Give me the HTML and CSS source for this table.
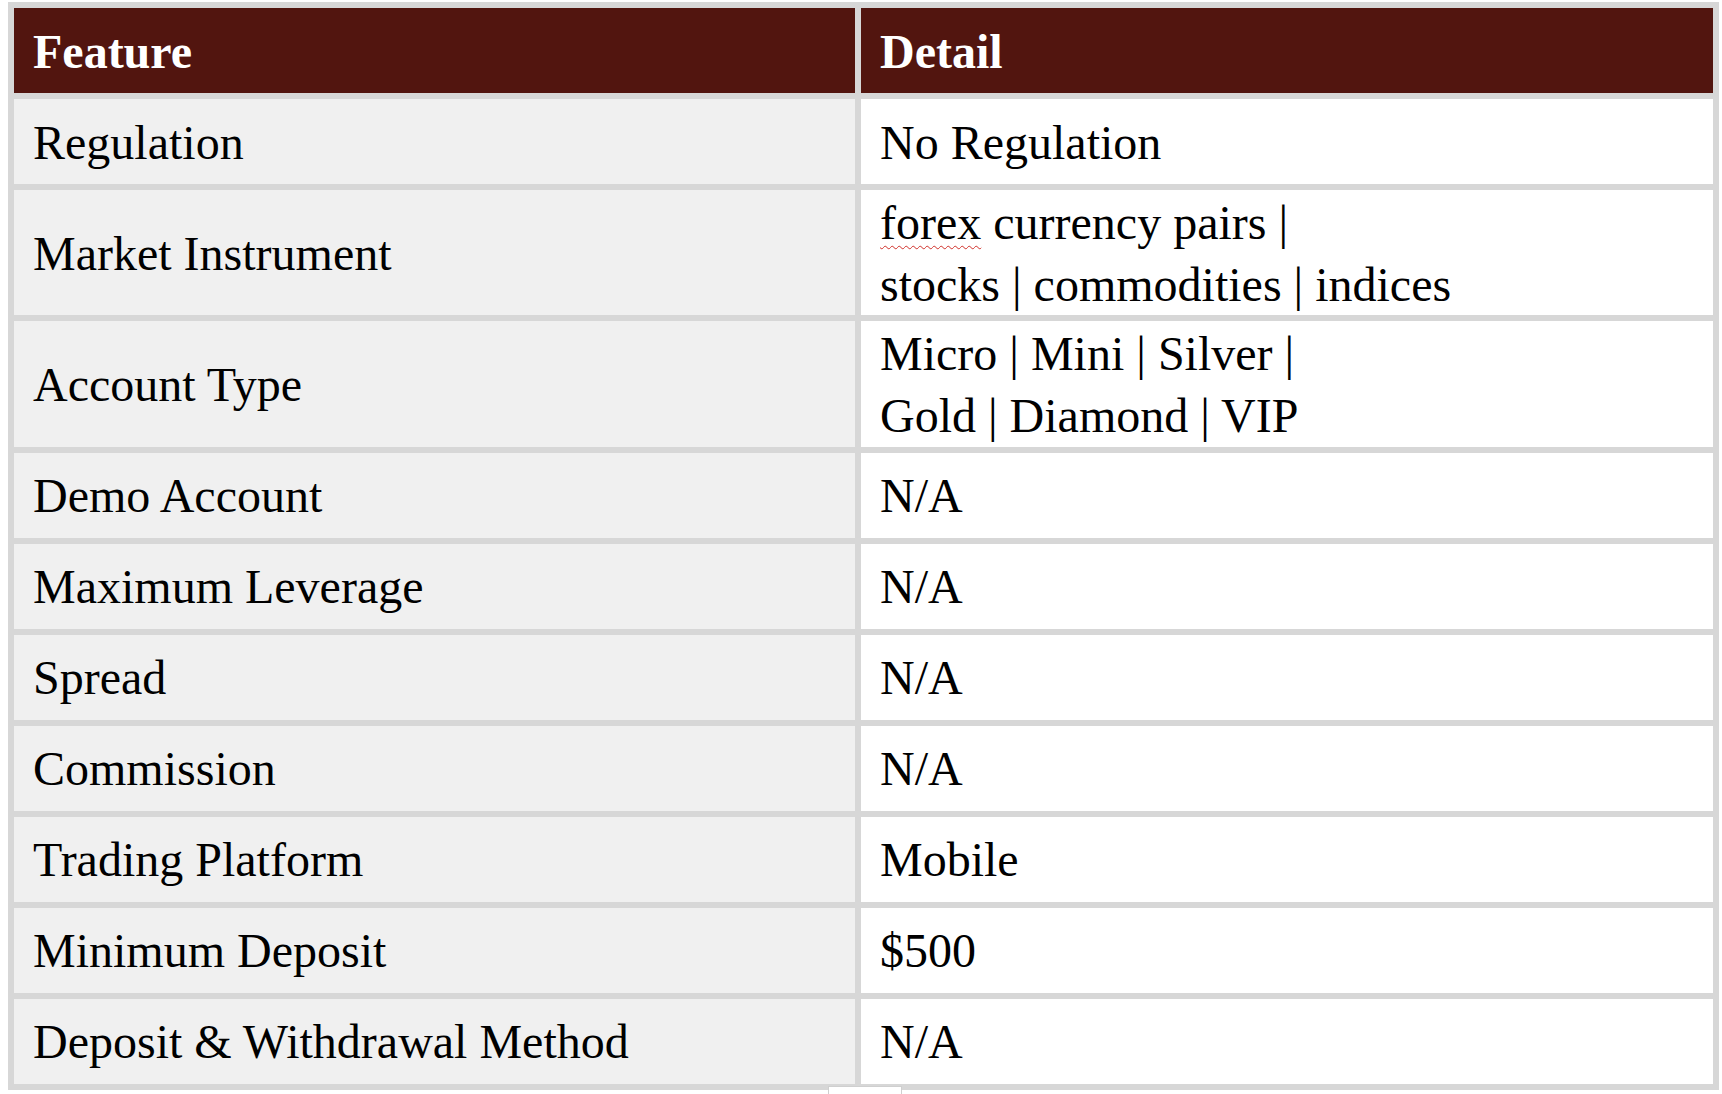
FILE: index.html
```html
<!DOCTYPE html>
<html lang="en">
<head>
<meta charset="utf-8">
<title>Feature Detail</title>
<link rel="stylesheet" href="styles.css">
</head>
<body>
<table class="spec">
  <colgroup>
    <col class="col-feature">
    <col class="col-detail">
  </colgroup>
  <thead>
    <tr><th>Feature</th><th>Detail</th></tr>
  </thead>
  <tbody>
    <tr><td>Regulation</td><td>No Regulation</td></tr>
    <tr class="double"><td>Market Instrument</td><td><span class="spell">forex</span> currency pairs |<br>stocks | commodities | indices</td></tr>
    <tr class="double"><td>Account Type</td><td>Micro | Mini | Silver |<br>Gold | Diamond | VIP</td></tr>
    <tr><td>Demo Account</td><td>N/A</td></tr>
    <tr><td>Maximum Leverage</td><td>N/A</td></tr>
    <tr><td>Spread</td><td>N/A</td></tr>
    <tr><td>Commission</td><td>N/A</td></tr>
    <tr><td>Trading Platform</td><td>Mobile</td></tr>
    <tr><td>Minimum Deposit</td><td>$500</td></tr>
    <tr><td>Deposit &amp; Withdrawal Method</td><td>N/A</td></tr>
  </tbody>
</table>
<div class="tab-stub"></div>
</body>
</html>
```

FILE: styles.css
```css
html, body {
  margin: 0;
  padding: 0;
  background: #ffffff;
}

body {
  padding: 2px 0 0 8px;
  font-family: "Liberation Serif", "Times New Roman", serif;
  color: #000000;
}

.spec {
  width: 1710px;
  table-layout: fixed;
  border-collapse: separate;
  border-spacing: 6px;
  background: #d7d7d7;
  font-size: 48px;
  line-height: 61.7px;
}

.col-feature { width: 841px; }
.col-detail { width: 852px; }

.spec th,
.spec td {
  padding: 2px 18px 0 19px;
  text-align: left;
  vertical-align: middle;
  height: 83px;
  box-sizing: border-box;
}

.spec th {
  background: #52150f;
  color: #ffffff;
  font-weight: bold;
  height: 85px;
}

.spec tbody tr { height: 85px; }
.spec tbody tr.double { height: 125px; }

.spec td:first-child { background: #f0f0f0; }
.spec td:last-child { background: #ffffff; }

.spell {
  text-decoration: underline wavy #d0302a;
  text-decoration-thickness: 1px;
  text-underline-offset: 6px;
}

.tab-stub {
  margin: -4px 0 0 820px;
  width: 72px;
  height: 8px;
  border: 1px solid #cfcfcf;
  border-bottom: none;
  background: #ffffff;
}
```
